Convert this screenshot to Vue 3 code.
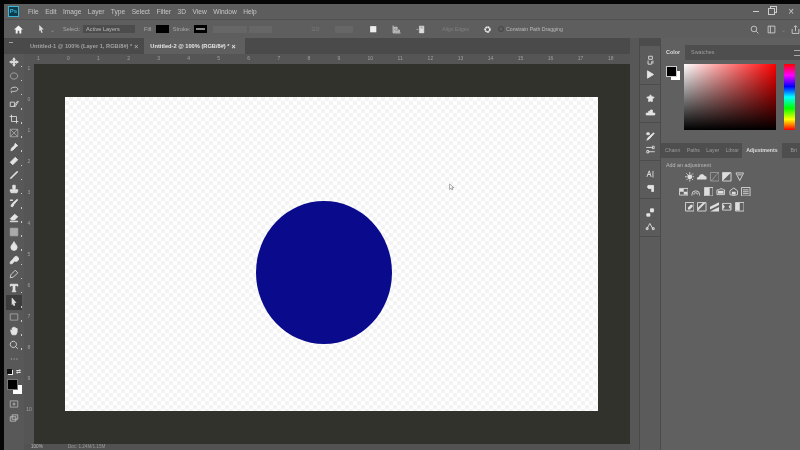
<script setup>
// Fake Photoshop window: menu, options bar, tools, document and panels
const menus = ['File', 'Edit', 'Image', 'Layer', 'Type', 'Select', 'Filter', '3D', 'View', 'Window', 'Help']
const topRuler = [1, 0, ...Array.from({ length: 18 }, (_, i) => i + 1)]
const sideRuler = [1, 0, 1, 2, 3, 4, 5, 6, 7, 8, 9, 10]

const tools = [
  { d: 'M8 1 L10 4 H9 V7 H12 V6 L15 8 L12 10 V9 H9 V12 H10 L8 15 L6 12 H7 V9 H4 V10 L1 8 L4 6 V7 H7 V4 H6 Z', fill: true },
  { d: 'M8 3 A6 5 0 1 0 8.01 3', fill: false, dim: true },
  { d: 'M3 7 C3 3 13 2 14 6 C15 10 7 11 5 10 C3 9 3 12 5 13', fill: false },
  { d: 'M2 5 H9 V12 H2 Z M8 11 L14 3 L15 4 L10 12 Z', fill: false },
  { d: 'M4 1 V12 H15 M1 4 H12 V15', fill: false },
  { d: 'M2 2 H14 V14 H2 Z M2 2 L14 14 M14 2 L2 14', fill: false, dim: true },
  { d: 'M10 2 L14 6 L12 7 L6 13 L3 14 L4 10 L9 5 Z', fill: true },
  { d: 'M10 2 L14 6 L6 14 L2 10 Z', fill: true },
  { d: 'M13 2 L14 3 L6 11 L3 14 L2 13 L5 10 Z', fill: true },
  { d: 'M6 2 H10 V7 L9 9 H14 V12 H2 V9 H7 L6 7 Z M3 13 H13 V14 H3 Z', fill: true },
  { d: 'M13 2 L14 3 L8 10 L6 14 L3 13 L5 9 Z M2 3 H6 V4 H2 Z', fill: true },
  { d: 'M9 2 L14 6 L9 11 H4 L2 9 Z M2 13 H14 V14 H2 Z', fill: true },
  { d: 'M2 2 H14 V14 H2 Z', fill: true, dim: true },
  { d: 'M8 1 C10 5 13 7 13 10 A5 5 0 0 1 3 10 C3 7 6 5 8 1 Z', fill: true },
  { d: 'M9 3 A4 4 0 1 1 9 9.5 L5 14 L2 14 L2 11 L6.5 6.5 Z', fill: true },
  { d: 'M10 2 L14 6 L7 13 L2 14 L3 9 Z', fill: false },
  { d: 'M2 2 H14 V5 H13 L12 4 H9.5 V12 L11 13 V14 H5 V13 L6.5 12 V4 H4 L3 5 H2 Z', fill: true },
  { d: 'M5 2 L11 9 H8 L9 13 L8 14 L6.5 10 L5 12 Z', fill: true, active: true },
  { d: 'M2 3 H14 V13 H2 Z', fill: false, dim: true },
  { d: 'M5 14 L3 9 V6 L5 8 V3 H7 V2 H9 V3 H11 V4 H13 V10 L11 14 Z', fill: true },
  { d: 'M7 2 A5 5 0 1 1 6.99 2 M10.5 10.5 L14 14', fill: false },
  { d: 'M3 8 H4.5 M7.5 8 H9 M12 8 H13.5', fill: false, noMark: true }
]

const dockGroups = [
  [
    { d: 'M6 2 H12 V7 H6 Z M5 9 V15 H11 V10 M13 9 V14', fill: false },
    { d: 'M4 3 L14 9 L4 15 Z', fill: true }
  ],
  [
    { d: 'M9 3 L11 6 L15 7 L12 10 L12 14 L9 13 L6 14 L6 10 L3 7 L7 6 Z', fill: true },
    { d: 'M2 10 L6 10 L6 7 L9 7 L9 5 L12 5 L12 10 L16 10 V13 H2 Z', fill: true }
  ],
  [
    { d: 'M3 15 L5 11 L14 3 L15 4 L7 13 Z M3 3 H7 V6 H3 Z', fill: true },
    { d: 'M2 4 H13 M6 11 H16 M12 2 H15 V6 H12 Z M3 9 H6 V13 H3 Z', fill: false }
  ],
  [
    { d: 'M3 13 L7 3 L10 13 M4.5 9 H9 M13 3 V14', fill: false },
    { d: 'M5 4 H14 V14 H11 V9 H8 A3 3 0 0 1 5 4 Z', fill: true }
  ],
  [
    { d: 'M3 11 H8 V15 H3 Z M9 3 H14 V8 H9 Z', fill: true },
    { d: 'M3 13 L8 4 L13 13 M2 11 H5 V14 H2 Z M12 11 H15 V14 H12 Z', fill: false }
  ]
]

// Each adjustment icon: outline path and an optional filled part
const adjustmentRows = [
  [
    { o: 'M5 0 V2 M5 8 V10 M0 5 H2 M8 5 H10 M1.5 1.5 L3 3 M7 7 L8.5 8.5 M8.5 1.5 L7 3 M1.5 8.5 L3 7', f: 'M5 2.5 A2.5 2.5 0 1 1 4.99 2.5' },
    { f: 'M0 8 V6 L2 5 L3 3 L6 2 L8 4 L10 5 V8 Z' },
    { o: 'M.5 .5 H9.5 V9.5 H.5 Z M1 9 C4 8 6 2 9 1', dim: true },
    { o: 'M.5 .5 H9.5 V9.5 H.5 Z', f: 'M1 1 H9 L1 9 Z' },
    { o: 'M1 1 H9 L5 9 Z M3 3 H7' }
  ],
  [
    { o: 'M.5 1.5 H9.5 V8.5 H.5 Z', f: 'M1 2 H5 V5 H1 Z M5 5 H9 V8 H5 Z' },
    { o: 'M1 8 A4 4 0 0 1 9 8 M3 8 A2 2 0 0 1 7 8 M1 8 V9 M9 8 V9' },
    { o: 'M.5 .5 H9.5 V9.5 H.5 Z', f: 'M1 1 H6 V9 H1 Z' },
    { o: 'M1 3 H3 L4 2 H7 L8 3 H9 V8 H1 Z', f: 'M2 4 H8 V7 H2 Z' },
    { o: 'M5 1 L9 4 V8 L5 9 L1 8 V4 Z', f: 'M3 5 H7 V8 H3 Z' },
    { o: 'M.5 .5 H9.5 V9.5 H.5 Z M2 3 H8 M2 5 H8 M2 7 H8' }
  ],
  [
    { o: 'M.5 .5 H9.5 V9.5 H.5 Z', f: 'M6 3 H8 V5 L5 8 H3 V6 Z' },
    { o: 'M.5 .5 H9.5 V9.5 H.5 Z', f: 'M1 6 L6 1 H9 L1 9 Z' },
    { f: 'M0 5 L10 0 V3 L0 8 Z M0 10 H10 V5 Z' },
    { o: 'M.5 1.5 H9.5 V8.5 H.5 Z', f: 'M1 2 L3 5 L1 8 Z M9 2 L7 5 L9 8 Z' },
    { o: 'M.5 .5 H9.5 V9.5 H.5 Z', f: 'M1 1 H5 V9 H1 Z' }
  ]
]

const lowerTabs = ['Chann', 'Paths', 'Layer', 'Librar']
</script>

<template>
  <div class="ps">
    <div class="top-black"></div>

    <header class="menu-bar">
      <div class="ps-logo"><span>Ps</span></div>
      <nav class="menus">
        <span v-for="m in menus" :key="m">{{ m }}</span>
      </nav>
      <div class="window-btns">
        <i class="win-min"></i>
        <i class="win-restore"></i>
        <span class="win-close">×</span>
      </div>
    </header>

    <div class="options-bar">
      <svg class="home" viewBox="0 0 16 16"><path d="M8 1 L16 8 H13 V15 H9.5 V10 H6.5 V15 H3 V8 H0 Z" /></svg>
      <svg class="arrow-tool" viewBox="0 0 16 16"><path d="M4 1 L12 9 H8 L10 14 L8 15 L6 10 L4 12 Z" /></svg>
      <span class="caret">⌄</span>
      <span class="opt-label select-label">Select:</span>
      <div class="opt-select">Active Layers</div>
      <span class="opt-label fill-label">Fill:</span>
      <div class="swatch"></div>
      <span class="opt-label stroke-label">Stroke:</span>
      <div class="swatch swatch-stroke"><b></b></div>
      <div class="ghost ghost-a"></div>
      <div class="ghost ghost-b"></div>
      <span class="ghost-text">GO</span>
      <div class="ghost ghost-c"></div>
      <svg class="opt-icon first" viewBox="0 0 16 16"><rect x="2" y="2" width="11" height="11" fill="#eee" /></svg>
      <svg class="opt-icon second" viewBox="0 0 16 16"><path d="M2 1 V14 H15 M4 4 H9 V7 H4 Z M4 9 H13 V12 H4 Z" fill="none" stroke="#ddd" stroke-width="1.6" /></svg>
      <svg class="opt-icon third" viewBox="0 0 16 16"><path d="M6 2 H14 V14 H6 Z M1 8 H4" fill="#ddd" stroke="#ddd" /><path d="M8 5 H12" stroke="#555" /></svg>
      <span class="align-edges">Align Edges</span>
      <svg class="gear" viewBox="0 0 16 16"><circle cx="8" cy="8" r="4.2" fill="none" stroke="#eee" stroke-width="3" stroke-dasharray="3 .6" /></svg>
      <i class="check"></i>
      <span class="constrain">Constrain Path Dragging</span>
      <div class="opt-right">
        <svg class="search" viewBox="0 0 16 16"><circle cx="7" cy="7" r="5" /><path d="M11 11 L15 15" /></svg>
        <svg class="search" viewBox="0 0 16 16"><path d="M2 2 H14 V14 H2 Z M6 2 V14" /></svg>
        <span class="caret right-caret">⌄</span>
        <svg class="search" viewBox="0 0 16 16"><path d="M2 7 V15 H14 V7 M8 11 V2 M5 4 L8 1 L11 4" /></svg>
      </div>
    </div>

    <main class="body">
      <aside class="tools">
        <div class="collapse-row"></div>
        <div v-for="(t, i) in tools" :key="i" class="tool" :class="{ active: t.active, plain: t.noMark }">
          <svg viewBox="0 0 16 16">
            <path
              :d="t.d"
              :fill="t.fill ? (t.dim ? '#aaa' : '#e4e4e4') : 'none'"
              :stroke="t.dim ? '#aaa' : '#e4e4e4'"
              stroke-width="1.3"
            />
          </svg>
        </div>
        <div class="mini-swatch">
          <i class="mini-b"></i>
          <span class="mini-swap">⇄</span>
        </div>
        <div class="colors">
          <i class="bg-col"></i>
          <i class="fg-col"></i>
        </div>
        <div class="tool plain mask-tool">
          <svg viewBox="0 0 16 16"><path d="M2 3 H14 V13 H2 Z" fill="none" stroke="#bbb" stroke-width="1.2" /><circle cx="8" cy="8" r="2.4" fill="#999" /></svg>
        </div>
        <div class="tool plain">
          <svg viewBox="0 0 16 16"><path d="M5 3 H14 V10 H5 Z M2 6 H11 V13 H2 Z" fill="none" stroke="#ccc" stroke-width="1.2" /></svg>
        </div>
      </aside>

      <section class="doc-area">
        <div class="tabs">
          <div class="tab">Untitled-1 @ 100% (Layer 1, RGB/8#) * <em>×</em></div>
          <div class="tab on">Untitled-2 @ 100% (RGB/8#) * <em>×</em></div>
        </div>
        <div class="ruler-top">
          <span v-for="(n, i) in topRuler" :key="i">{{ n }}</span>
        </div>
        <div class="doc-mid">
          <div class="ruler-side">
            <span v-for="(n, i) in sideRuler" :key="i">{{ n }}</span>
          </div>
          <div class="pasteboard">
            <div class="page">
              <div class="circle"></div>
              <svg class="cursor" viewBox="0 0 10 12"><path d="M1 1 L8 7 H5 L6.5 10 L5 11 L3.5 8 L1 10 Z" fill="#fff" stroke="#555" stroke-width=".8" /></svg>
            </div>
          </div>
        </div>
        <div class="status">
          <span>100%</span>
          <span class="doc-size">Doc: 1.24M/1.15M</span>
        </div>
      </section>

      <div class="dock-sep"></div>

      <aside class="dock">
        <div class="dock-head"></div>
        <div v-for="(group, g) in dockGroups" :key="g" class="dock-group">
          <div v-for="(icon, i) in group" :key="i" class="dock-icon">
            <svg viewBox="0 0 18 18">
              <path :d="icon.d" :fill="icon.fill ? '#e4e4e4' : 'none'" stroke="#e4e4e4" stroke-width="1.4" />
            </svg>
          </div>
        </div>
      </aside>

      <aside class="panels">
        <div class="panel-tabs first-tabs">
          <span class="ptab on">Color</span>
          <span class="ptab">Swatches</span>
          <span class="menu-lines"></span>
        </div>
        <div class="color-panel">
          <div class="fg-bg">
            <i class="p-bg"></i>
            <i class="p-fg"></i>
          </div>
          <div class="picker"></div>
          <div class="hue"></div>
        </div>

        <div class="panel-tabs lower-tabs">
          <span v-for="t in lowerTabs" :key="t" class="ptab small">{{ t }}</span>
          <span class="ptab small on">Adjustments</span>
          <span class="ptab small last">Bri</span>
        </div>
        <div class="adjust">
          <div class="adj-title">Add an adjustment</div>
          <div v-for="(row, r) in adjustmentRows" :key="r" class="adj-row" :class="'row-' + r">
            <svg v-for="(a, i) in row" :key="i" class="adj" viewBox="0 0 10 10">
              <path v-if="a.f" :d="a.f" fill="#ddd" />
              <path v-if="a.o" :d="a.o" fill="none" :stroke="a.dim ? '#999' : '#d4d4d4'" stroke-width="1" />
            </svg>
          </div>
        </div>
      </aside>
    </main>
  </div>
</template>

<style>
html, body { margin: 0; background: #000; overflow: hidden; }
</style>

<style scoped>
.ps {
  width: 800px;
  height: 450px;
  box-sizing: border-box;
  padding-left: 4px;
  display: flex;
  flex-direction: column;
  background: #060606;
  color: #ccc;
  font-family: "Liberation Sans", Arial, sans-serif;
  font-size: 6px;
  overflow: hidden;
  filter: blur(0.45px);
}

.top-black { height: 4px; margin-left: -4px; background: #050505; flex: none; }

.menu-bar {
  height: 15px;
  flex: none;
  display: flex;
  align-items: center;
  background: #5d5d5d;
}
.ps-logo {
  width: 11px;
  height: 11px;
  margin-left: 4px;
  background: #0f3c4c;
  border: 1px solid #38b6d8;
  box-sizing: border-box;
  color: #38b6d8;
  font-size: 6px;
  line-height: 9px;
  text-align: center;
  font-weight: bold;
}
.menus {
  display: flex;
  gap: 6.5px;
  margin-left: 9px;
  font-size: 6.6px;
  color: #c6c6c6;
}
.window-btns {
  margin-left: auto;
  display: flex;
  align-items: center;
  gap: 9px;
  margin-right: 6px;
}
.win-min { width: 6px; height: 1.5px; background: #ccc; }
.win-restore { width: 5px; height: 5px; border: 1px solid #ccc; box-shadow: 2px -2px 0 -1px #5d5d5d, 2px -2px 0 0 #ccc; }
.win-close { font-size: 10px; line-height: 8px; color: #ccc; margin-left: 4px; }

.options-bar {
  height: 19px;
  flex: none;
  display: flex;
  align-items: center;
  background: #5e5e5e;
  border-top: 1px solid #505050;
  box-sizing: border-box;
}
.home { width: 9px; height: 9px; margin-left: 10px; fill: #f2f2f2; }
.arrow-tool { width: 9px; height: 10px; margin-left: 14px; fill: #ddd; }
.caret { margin-left: 4px; font-size: 6px; color: #999; }
.opt-label { color: #a8a8a8; font-size: 5.6px; }
.select-label { margin-left: 8px; }
.opt-select {
  width: 49px;
  height: 8px;
  margin-left: 3px;
  padding-left: 3px;
  line-height: 8px;
  background: #4c4c4c;
  color: #bbb;
  font-size: 5.6px;
}
.fill-label { margin-left: 9px; }
.swatch { width: 13px; height: 8px; background: #000; margin-left: 3px; flex: none; }
.stroke-label { margin-left: 4px; }
.swatch-stroke { display: flex; align-items: center; justify-content: center; }
.swatch-stroke b { width: 9px; height: 2px; background: #888; }
.ghost { height: 7px; background: #666; flex: none; }
.ghost-a { width: 34px; margin-left: 6px; }
.ghost-b { width: 23px; margin-left: 2px; }
.ghost-text { margin-left: 40px; color: #7c7c7c; font-size: 5px; }
.ghost-c { width: 18px; margin-left: 16px; }
.opt-icon { width: 9px; height: 9px; flex: none; }
.opt-icon.first { margin-left: 15.5px; }
.opt-icon.second { margin-left: 14px; }
.opt-icon.third { margin-left: 15px; }
.align-edges { margin-left: 17.5px; color: #808080; font-size: 5px; }
.gear { width: 9px; height: 9px; margin-left: 14px; flex: none; }
.check {
  width: 4px;
  height: 4px;
  margin-left: 6px;
  border: 1px solid #444;
  border-radius: 50%;
}
.constrain { margin-left: 2px; color: #bcbcbc; font-size: 5.2px; }
.opt-right { margin-left: auto; display: flex; align-items: center; gap: 8px; }
.search { width: 9px; height: 9px; fill: none; stroke: #ccc; stroke-width: 1.6; }
.right-caret { margin: 0 -3px; color: #888; }

.body { flex: 1; min-height: 0; display: flex; }

.tools {
  width: 20px;
  flex: none;
  display: flex;
  flex-direction: column;
  align-items: center;
  background: #585858;
  border-top: 1px solid #494949;
  box-sizing: border-box;
}
.collapse-row { height: 15px; width: 100%; background: #4a4a4a; margin-bottom: 1px; position: relative; }
.collapse-row::after {
  content: "";
  position: absolute;
  left: 5px;
  top: 3px;
  width: 4px;
  height: 1px;
  background: #a0a0a0;
}
.tool {
  width: 16px;
  height: 14.15px;
  flex: none;
  display: flex;
  align-items: center;
  justify-content: center;
  position: relative;
}
.tool svg { width: 10px; height: 10px; }
/* little mark for the tools with a flyout */
.tool::after {
  content: "";
  position: absolute;
  right: 0;
  bottom: 2px;
  width: 1.5px;
  height: 1.5px;
  background: #c8c8c8;
}
.tool.plain::after { display: none; }
.tool.active { background: #3c3c3c; }
.mini-swatch { width: 14px; height: 7px; margin-top: 3px; display: flex; justify-content: space-between; }
.mini-b { width: 5px; height: 5px; background: #111; box-shadow: 1px 1px 0 #eee; }
.mini-swap { font-size: 6px; line-height: 6px; color: #ddd; }
.colors { width: 15px; height: 15px; margin-top: 3px; flex: none; position: relative; }
.fg-col { width: 9px; height: 9px; background: #000; border: 1px solid #777; position: absolute; left: 0; top: 0; }
.bg-col { width: 9px; height: 9px; background: #fff; position: absolute; right: 0; bottom: 0; }
.mask-tool { margin-top: 3px; }

.doc-area { flex: none; width: 606px; display: flex; flex-direction: column; }
.tabs {
  height: 16px;
  flex: none;
  display: flex;
  background: #4a4a4a;
  padding-left: 6px;
}
.tab {
  display: flex;
  align-items: center;
  gap: 2px;
  padding: 0 5px 0 0;
  margin-right: 1px;
  color: #a2a2a2;
  font-size: 5.7px;
  font-weight: bold;
  white-space: nowrap;
}
.tab em { font-style: normal; font-size: 7px; }
.tab.on { background: #5f5f5f; color: #e4e4e4; padding-left: 6px; padding-right: 9px; }

.ruler-top {
  height: 10px;
  flex: none;
  display: flex;
  padding-left: 13px;
  background: #555;
  color: #a0a0a0;
  font-size: 5px;
  line-height: 9px;
}
.ruler-top span { width: 30.05px; flex: none; }
.doc-mid { flex: 1; min-height: 0; display: flex; }
.ruler-side {
  width: 10px;
  flex: none;
  background: #555;
  color: #a0a0a0;
  font-size: 5px;
  text-align: center;
  overflow: hidden;
}
.ruler-side span { display: block; height: 31px; line-height: 8px; }
.pasteboard {
  flex: 1;
  background: #32322c;
  padding: 33px 32px 0 31px;
}
.page {
  width: 533px;
  height: 314px;
  position: relative;
  background-color: #fff;
  background-image: repeating-conic-gradient(#f3f3f3 0 25%, #fff 0 50%);
  background-size: 8px 8px;
}
.circle {
  position: absolute;
  left: 191px;
  top: 104px;
  width: 136px;
  height: 143px;
  border-radius: 50%;
  background: #0a0a8c;
}
.cursor { position: absolute; left: 384px; top: 86px; width: 6px; height: 8px; }
.status {
  height: 6px;
  flex: none;
  background: #525252;
  color: #bbb;
  font-size: 4.6px;
  line-height: 6px;
  padding-left: 7px;
  display: flex;
  gap: 25px;
}
.doc-size { color: #999; }

.dock-sep { width: 10px; flex: none; background: #575757; border-right: 1px solid #4a4a4a; box-sizing: border-box; }

.dock {
  width: 20px;
  flex: none;
  background: #5b5b5b;
  display: flex;
  flex-direction: column;
  align-items: center;
}
.dock-head { height: 8px; width: 100%; background: #4c4c4c; margin-bottom: 1px; flex: none; }
.dock-group {
  padding: 6px 0 3px;
  border-bottom: 1px solid #4c4c4c;
  width: 100%;
  display: flex;
  flex-direction: column;
  align-items: center;
}
.dock-group:first-of-type { padding-top: 4px; }
.dock-icon { width: 12px; height: 14px; display: flex; align-items: center; justify-content: center; }
.dock-icon svg { width: 11px; height: 11px; }

.panels { flex: 1; min-width: 0; background: #606060; border-left: 1px solid #4b4b4b; }
.panel-tabs { display: flex; align-items: stretch; background: #4e4e4e; }
.first-tabs { height: 15px; margin-top: 7px; }
.ptab { padding: 0 5px; line-height: 15px; color: #9c9c9c; font-size: 5.4px; white-space: nowrap; }
.ptab.on { background: #606060; color: #ddd; font-weight: bold; }
.first-tabs .ptab { margin-right: 1px; }
.menu-lines { margin-left: auto; width: 6px; height: 4px; margin-top: 5px; border-top: 1px solid #aaa; border-bottom: 1px solid #aaa; }
.color-panel { height: 83px; display: flex; box-sizing: border-box; padding-top: 4px; }
.fg-bg { width: 24px; height: 20px; position: relative; flex: none; margin-left: 4px; }
.p-fg { position: absolute; left: 1px; top: 2px; width: 9px; height: 9px; background: #000; border: 1px solid #ccc; }
.p-bg { position: absolute; left: 6px; top: 7px; width: 9px; height: 9px; background: #fff; }
.picker {
  width: 92px;
  height: 66px;
  flex: none;
  margin-left: -5px;
  background:
    linear-gradient(to top, #000, rgba(0, 0, 0, 0)),
    linear-gradient(to right, #fff, #f00);
}
.hue {
  width: 11px;
  height: 66px;
  flex: none;
  margin-left: 8px;
  background: linear-gradient(to bottom, #f00, #f0f 17%, #00f 34%, #0ff 50%, #0f0 67%, #ff0 84%, #f00);
}

.lower-tabs { height: 15px; }
.ptab.small { padding: 0 3.2px; font-size: 5.2px; }
.ptab.small:first-child { padding-left: 4px; }
.ptab.small.on { padding: 0 4px; }
.ptab.last { margin-left: auto; }
.adjust { padding: 3px 0 0 5px; }
.adj-title { color: #bbb; font-size: 5.4px; line-height: 8px; }
.adj-row { display: flex; gap: 3px; margin-top: 6px; }
.adj { width: 9.5px; height: 9.5px; flex: none; }
.row-0 { margin-left: 18.5px; margin-top: 3px; }
.row-1 { margin-left: 12.5px; margin-top: 5px; }
.row-2 { margin-left: 18.5px; margin-top: 6px; }
</style>
